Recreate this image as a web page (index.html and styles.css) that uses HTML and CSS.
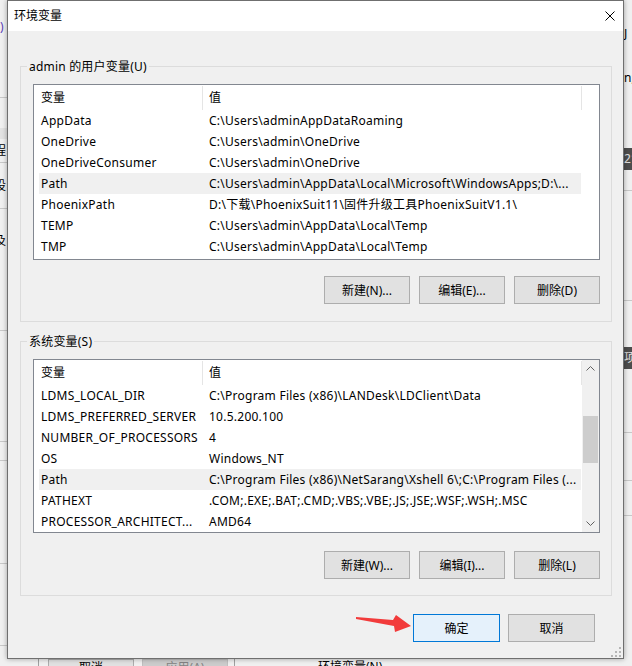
FILE: index.html
```html
<!DOCTYPE html>
<html lang="zh-CN">
<head>
<meta charset="utf-8">
<title>环境变量</title>
<link rel="stylesheet" href="styles.css">
</head>
<body>
<div class="backwin">
  <span class="bg-frag bf-paren">)</span>
  <div class="bg-line" style="top:97px"></div>
  <div class="bg-band" style="top:128px"></div>
  <span class="bg-frag bf-l" style="top:143px">程</span>
  <div class="bg-line" style="top:162px"></div>
  <span class="bg-frag bf-l" style="top:178px">设</span>
  <div class="bg-line" style="top:208px"></div>
  <span class="bg-frag bf-l" style="top:233px">及</span>
  <div class="bg-line" style="top:330px"></div>
  <div class="bg-line" style="top:441px"></div>
  <div class="bg-line" style="top:460px"></div>
  <div class="bg-line" style="top:563px"></div>
  <div class="bg-line" style="top:645px"></div>

  <span class="bg-frag bf-r" style="top:26px">J</span>
  <span class="bg-frag bf-r" style="top:70px">n;</span>
  <div class="bg-dark" style="top:148px"><span>21</span></div>
  <div class="bg-rline" style="top:190px"></div>
  <div class="bg-rline" style="top:300px"></div>
  <div class="bg-dark" style="top:347px"><span>项</span></div>
  <div class="bg-rline" style="top:432px"></div>
  <div class="bg-rline" style="top:480px"></div>
  <div class="bg-rline" style="top:515px"></div>

  <div class="bg-vline" style="left:38px"></div>
  <div class="bg-btn" style="left:48px">取消</div>
  <div class="bg-btn bg-btn-dis" style="left:142px">应用(A)</div>
  <div class="bg-vline" style="left:234px"></div>
  <span class="bg-bottom-text">环境变量(N)...</span>
</div>

<div class="dialog">
  <div class="titlebar">
    <span class="title">环境变量</span>
    <svg class="close" width="10" height="10" viewBox="0 0 10 10"><path d="M0.5 0.5 L9.5 9.5 M9.5 0.5 L0.5 9.5" stroke="#000" stroke-width="1" fill="none"/></svg>
  </div>
  <div class="client">
    <div class="group g1">
      <div class="group-label">admin 的用户变量(U)</div>
      <div class="list l1">
        <div class="list-main">
          <div class="list-head"><div class="hcell c1">变量</div><div class="hcell c2">值</div></div>
          <div class="row"><span class="n">AppData</span><span class="v">C:\Users\adminAppDataRoaming</span></div>
          <div class="row"><span class="n">OneDrive</span><span class="v">C:\Users\admin\OneDrive</span></div>
          <div class="row"><span class="n">OneDriveConsumer</span><span class="v">C:\Users\admin\OneDrive</span></div>
          <div class="row sel"><span class="n">Path</span><span class="v">C:\Users\admin\AppData\Local\Microsoft\WindowsApps;D:\...</span></div>
          <div class="row"><span class="n">PhoenixPath</span><span class="v">D:\下载\PhoenixSuit11\固件升级工具PhoenixSuitV1.1\</span></div>
          <div class="row"><span class="n">TEMP</span><span class="v">C:\Users\admin\AppData\Local\Temp</span></div>
          <div class="row"><span class="n">TMP</span><span class="v">C:\Users\admin\AppData\Local\Temp</span></div>
        </div>
        <div class="list-blank"></div>
      </div>
      <div class="btn-row">
        <button class="btn">新建(N)...</button>
        <button class="btn">编辑(E)...</button>
        <button class="btn">删除(D)</button>
      </div>
    </div>

    <div class="group g2">
      <div class="group-label">系统变量(S)</div>
      <div class="list l2">
        <div class="list-main">
          <div class="list-head"><div class="hcell c1">变量</div><div class="hcell c2">值</div></div>
          <div class="row"><span class="n">LDMS_LOCAL_DIR</span><span class="v">C:\Program Files (x86)\LANDesk\LDClient\Data</span></div>
          <div class="row"><span class="n">LDMS_PREFERRED_SERVER</span><span class="v">10.5.200.100</span></div>
          <div class="row"><span class="n">NUMBER_OF_PROCESSORS</span><span class="v">4</span></div>
          <div class="row"><span class="n">OS</span><span class="v">Windows_NT</span></div>
          <div class="row sel"><span class="n">Path</span><span class="v">C:\Program Files (x86)\NetSarang\Xshell 6\;C:\Program Files (...</span></div>
          <div class="row"><span class="n">PATHEXT</span><span class="v">.COM;.EXE;.BAT;.CMD;.VBS;.VBE;.JS;.JSE;.WSF;.WSH;.MSC</span></div>
          <div class="row"><span class="n">PROCESSOR_ARCHITECT...</span><span class="v">AMD64</span></div>
        </div>
        <div class="scrollbar">
          <div class="sb-btn"><svg width="9" height="5" viewBox="0 0 9 5"><path d="M0.5 4.5 L4.5 0.5 L8.5 4.5" stroke="#606060" fill="none"/></svg></div>
          <div class="sb-track"><div class="sb-thumb"></div></div>
          <div class="sb-btn"><svg width="9" height="5" viewBox="0 0 9 5"><path d="M0.5 0.5 L4.5 4.5 L8.5 0.5" stroke="#606060" fill="none"/></svg></div>
        </div>
      </div>
      <div class="btn-row">
        <button class="btn">新建(W)...</button>
        <button class="btn">编辑(I)...</button>
        <button class="btn">删除(L)</button>
      </div>
    </div>

    <div class="footer">
      <button class="btn btn-wide primary">确定</button>
      <button class="btn btn-wide">取消</button>
    </div>
  </div>
  <svg class="grip" width="12" height="12" viewBox="0 0 12 12">
    <rect x="8" y="1" width="2" height="2" fill="#b5b5b5"/>
    <rect x="4" y="5" width="2" height="2" fill="#b5b5b5"/>
    <rect x="8" y="5" width="2" height="2" fill="#b5b5b5"/>
    <rect x="0" y="9" width="2" height="2" fill="#b5b5b5"/>
    <rect x="4" y="9" width="2" height="2" fill="#b5b5b5"/>
    <rect x="8" y="9" width="2" height="2" fill="#b5b5b5"/>
  </svg>
</div>

<svg class="arrow" width="60" height="24" viewBox="0 0 60 24">
  <polygon points="2,5 39,8 42,3 57,14 41,20 40,14 2,7" fill="#f23b3b"/>
</svg>
</body>
</html>
```
FILE: styles.css
```css
html, body {
  margin: 0;
  padding: 0;
}
body {
  width: 632px;
  height: 666px;
  overflow: hidden;
  position: relative;
  background: #f0f0f0;
  font-family: "Noto Sans", "Noto Sans CJK SC", sans-serif;
  font-size: 12px;
  color: #000;
}

/* window behind the dialog */
.backwin {
  position: absolute;
  inset: 0;
  background: #f0f0f0;
}
.bg-frag {
  position: absolute;
  font-size: 12px;
  line-height: 16px;
  color: #000;
}
.bf-paren { left: 0; top: 19px; color: #5b3fb5; }
.bf-l { left: -6px; }
.bf-r { left: 624px; }
.bg-line {
  position: absolute;
  left: 0;
  width: 8px;
  height: 1px;
  background: #c8c8c8;
}
.bg-band {
  position: absolute;
  left: 0;
  width: 8px;
  height: 11px;
  background: #e2e2e2;
}
.bg-rline {
  position: absolute;
  left: 622px;
  width: 10px;
  height: 1px;
  background: #c8c8c8;
}
.bg-dark {
  position: absolute;
  left: 622px;
  width: 10px;
  height: 22px;
  background: #4d4d4d;
  overflow: hidden;
}
.bg-dark span {
  display: block;
  margin-left: 2px;
  color: #e0e0e0;
  line-height: 22px;
}
.bg-vline {
  position: absolute;
  top: 659px;
  width: 1px;
  height: 7px;
  background: #a0a0a0;
}
.bg-btn {
  position: absolute;
  top: 659px;
  width: 86px;
  height: 20px;
  box-sizing: border-box;
  border: 1px solid #adadad;
  background: #e1e1e1;
  text-align: center;
  line-height: 12px;
  padding-top: 2px;
}
.bg-btn-dis {
  background: #cccccc;
  border-color: #bfbfbf;
  color: #838383;
}
.bg-bottom-text {
  position: absolute;
  left: 318px;
  top: 660px;
  line-height: 14px;
}

/* dialog window */
.dialog {
  position: absolute;
  left: 7px;
  top: 0;
  width: 617px;
  height: 659px;
  box-sizing: border-box;
  border: 1px solid #6f6f6f;
  background: #f0f0f0;
  display: flex;
  flex-direction: column;
  box-shadow: 0 0 5px rgba(0, 0, 0, 0.35);
}
.titlebar {
  flex: none;
  height: 30px;
  background: #fff;
  display: flex;
  align-items: center;
  padding-left: 6px;
}
.title {
  flex: 1;
  line-height: 16px;
}
.close {
  margin-right: 8px;
  display: block;
}
.client {
  flex: 1;
  display: flex;
  flex-direction: column;
  padding: 35px 11px 16px 12px;
}

.group {
  display: flex;
  flex-direction: column;
  border: 1px solid #dcdcdc;
  padding: 0 11px 17px 12px;
}
.g2 {
  margin-top: 19px;
  padding-bottom: 16px;
}
.group-label {
  align-self: flex-start;
  height: 16px;
  line-height: 16px;
  margin: -8px 0 0 -6px;
  padding: 0 2px;
  background: #f0f0f0;
  white-space: nowrap;
  letter-spacing: 0.2px;
}

.list {
  margin-top: 9px;
  height: 176px;
  box-sizing: border-box;
  border: 1px solid #828790;
  background: #fff;
  display: flex;
  overflow: hidden;
}
.l2 { height: 174px; }
.list-main {
  width: 548px;
  flex: none;
  display: flex;
  flex-direction: column;
}
.list-head {
  display: flex;
  height: 25px;
  flex: none;
}
.hcell {
  box-sizing: border-box;
  height: 24px;
  margin-top: 1px;
  line-height: 23px;
  border-right: 1px solid #e5e5e5;
}
.c1 { width: 169px; padding-left: 7px; }
.c2 { width: 379px; padding-left: 6px; }

.row {
  display: flex;
  flex: none;
  width: 542px;
  height: 21px;
  line-height: 21px;
  margin-left: 5px;
  white-space: nowrap;
  letter-spacing: 0.25px;
}
.row.sel { background: #f0f0f0; }
.n {
  width: 163px;
  padding-left: 2px;
  box-sizing: border-box;
  overflow: hidden;
  flex: none;
}
.v {
  width: 379px;
  padding-left: 7px;
  box-sizing: border-box;
  overflow: hidden;
  flex: none;
}
.list-blank { width: 17px; flex: none; }

.scrollbar {
  width: 17px;
  flex: none;
  background: #f0f0f0;
  display: flex;
  flex-direction: column;
}
.sb-btn {
  height: 17px;
  flex: none;
  display: flex;
  align-items: center;
  justify-content: center;
}
.sb-btn svg { display: block; }
.sb-track { flex: 1; }
.sb-thumb {
  margin: 39px 0 0 1px;
  width: 15px;
  height: 47px;
  background: #cdcdcd;
}

.btn-row {
  display: flex;
  justify-content: flex-end;
  gap: 9px;
  margin-top: 16px;
}
.g2 .btn-row { margin-top: 18px; }
.btn {
  width: 86px;
  height: 28px;
  box-sizing: border-box;
  border: 1px solid #adadad;
  background: #e1e1e1;
  font: inherit;
  color: #000;
  padding: 0;
  margin: 0;
}
.btn-wide { width: 87px; }
.primary {
  border-color: #0078d7;
  background: #e5f1fb;
}
.footer {
  display: flex;
  justify-content: flex-end;
  gap: 8px;
  margin-top: 18px;
  padding-right: 17px;
}
.grip {
  position: absolute;
  right: 0;
  bottom: 0;
  display: block;
}
.arrow {
  position: absolute;
  left: 354px;
  top: 612px;
  display: block;
}
```
